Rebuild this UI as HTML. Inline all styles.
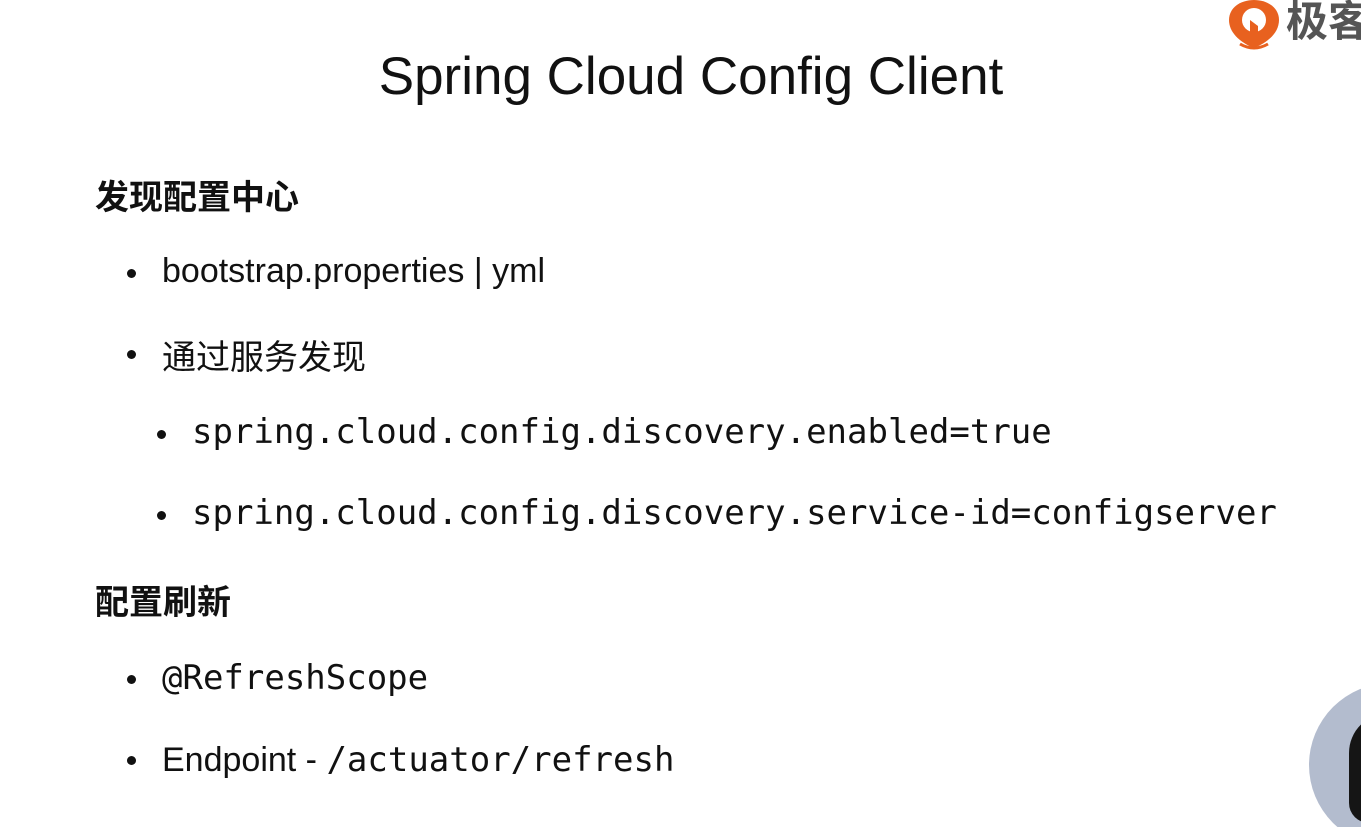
<!DOCTYPE html>
<html><head><meta charset="utf-8"><style>
html,body{margin:0;width:1361px;height:827px;overflow:hidden}
body{background:#fff;position:relative;font-family:"Liberation Sans","Noto Sans CJK SC",sans-serif;color:#111}
.a{position:absolute;white-space:nowrap}
.t{left:0;width:1382px;text-align:center;top:46px;font-size:53px}
.h{left:95px;font-size:34px;font-weight:bold}
.b{font-size:34px}
.m{font-family:"DejaVu Sans Mono","Liberation Mono",monospace;font-size:34px}
.dot{position:absolute;width:9px;height:9px;border-radius:50%;background:#111}
</style></head><body>
<div class="a t">Spring Cloud Config Client</div>
<div class="a h" style="top:170px">发现配置中心</div>
<div class="dot" style="left:127px;top:269px"></div>
<div class="a b" style="left:162px;top:252px">bootstrap.properties | yml</div>
<div class="dot" style="left:127px;top:350px"></div>
<div class="a b" style="left:162px;top:330px">通过服务发现</div>
<div class="dot" style="left:157px;top:430px"></div>
<div class="a m" style="left:192px;top:412px">spring.cloud.config.discovery.enabled=true</div>
<div class="dot" style="left:157px;top:511px"></div>
<div class="a m" style="left:192px;top:493px">spring.cloud.config.discovery.service-id=configserver</div>
<div class="a h" style="top:575px">配置刷新</div>
<div class="dot" style="left:127px;top:675px"></div>
<div class="a m" style="left:162px;top:658px">@RefreshScope</div>
<div class="dot" style="left:127px;top:756px"></div>
<div class="a b" style="left:162px;top:740px">Endpoint - <span class="m">/actuator/refresh</span></div>
<svg class="a" style="left:1226px;top:0" width="56" height="55" viewBox="0 0 56 55">
<path d="M28 0C14 0 3 8 3 20c0 12 10 22 25 28C43 42 53 32 53 20 53 8 42 0 28 0z" fill="#e8611f"/>
<circle cx="28" cy="20" r="12" fill="#fff"/>
<path d="M24 20v20h8V26z" fill="#e8611f"/>
<path d="M14 44q14 8 28 0" stroke="#e8611f" stroke-width="3" fill="none"/>
</svg>
<div class="a" style="left:1286px;top:-2px;font-size:42px;color:#555;font-weight:bold;line-height:48px">极客</div>
<div class="a" style="left:1309px;top:683px;width:164px;height:164px;border-radius:50%;background:#b3bcce;overflow:hidden">
<div style="position:absolute;left:40px;top:30px;width:60px;height:110px;border-radius:40px 0 0 20px;background:#151515"></div>
</div>
</body></html>
